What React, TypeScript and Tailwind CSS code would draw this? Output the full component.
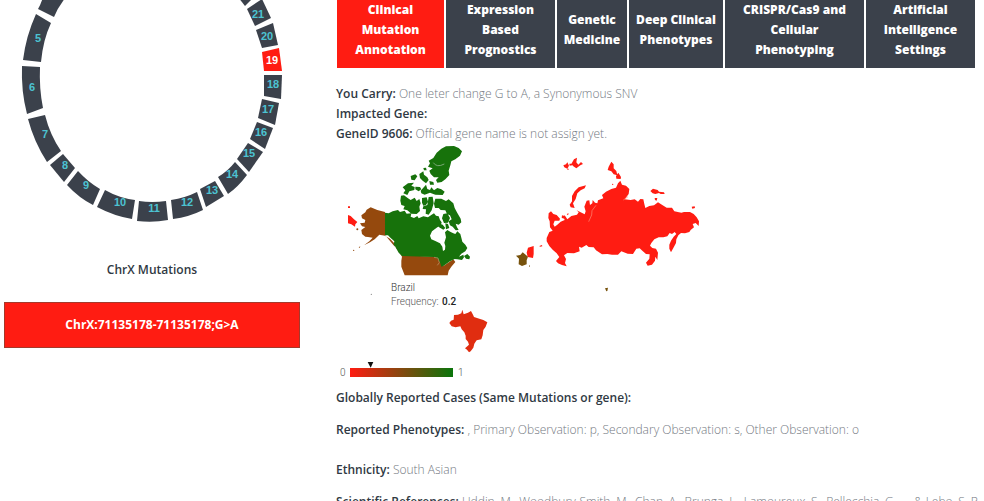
import React from "react";

const ink = "#3b414b";
const red = "#ff1c12";

const segments = [
  { n: "", d: "M38,9 Q41,4 43,-3 L66,-3 Q58,7 54,17 Z" },
  { n: "5", x: 38, y: 38, d: "M36,14 Q26,36 23,60 L41,62 Q43,40 51,23 Z" },
  { n: "6", x: 32, y: 87, d: "M22,66 Q21,91 27,114 L43,108 Q39,88 40,67 Z" },
  { n: "7", x: 45, y: 134, d: "M28,119 Q34,142 47,162 L61,151 Q50,135 45,115 Z" },
  { n: "8", x: 65, y: 165, d: "M50,165 L64,182 75,168 63,154 Z" },
  { n: "9", x: 86, y: 185, d: "M67,185 Q79,198 93,205 L100,189 Q88,182 78,171 Z" },
  { n: "10", x: 120, y: 202, d: "M97,207 Q114,216 132,219 L135,200 Q119,198 105,190 Z" },
  { n: "11", x: 154, y: 208, d: "M137,221 Q153,223 168,220 L166,201 Q152,203 139,201 Z" },
  { n: "12", x: 187, y: 202, d: "M173,219 Q189,217 203,210 L197,192 Q185,198 171,200 Z" },
  { n: "13", x: 212, y: 190, d: "M206,207 L224,196 215,181 200,189 Z" },
  { n: "14", x: 232, y: 174, d: "M228,194 Q238,187 247,175 L235,162 Q228,171 218,177 Z" },
  { n: "15", x: 249, y: 153, d: "M249,172 L263,152 248,143 237,159 Z" },
  { n: "16", x: 261, y: 132, d: "M265,149 L273,128 257,122 250,139 Z" },
  { n: "17", x: 268, y: 109, d: "M275,125 L279,103 262,99 258,118 Z" },
  { n: "18", x: 273, y: 84, d: "M281,99 L282,75 264,75 264,96 Z" },
  { n: "19", x: 272, y: 60, active: true, d: "M282,71 L279,48 262,52 264,71 Z" },
  { n: "20", x: 267, y: 36, d: "M278,45 L273,23 256,30 262,48 Z" },
  { n: "21", x: 258, y: 14, d: "M271,18 L262,-1 247,9 255,26 Z" },
  { n: "", d: "M245,6 L253,-2 238,-3 Z" },
];

function Ring() {
  return (
    <svg viewBox="0 0 304 232" className="block w-[304px]" role="img" aria-label="Chromosomes">
      {segments.map((s, i) => (
        <g key={i}>
          <path d={s.d} fill={s.active ? red : ink} />
          {s.n && (
            <text
              x={s.x}
              y={s.y! + 4}
              textAnchor="middle"
              className="font-['Liberation_Sans',sans-serif] text-[11px] font-bold"
              fill={s.active ? "#ffffff" : "#4cc3d2"}
            >
              {s.n}
            </text>
          )}
        </g>
      ))}
    </svg>
  );
}

function FrequencyMap() {
  return (
    <svg viewBox="336 144 376 236" className="block w-[376px]" role="img" aria-label="Frequency by country">
      <defs>
        <linearGradient id="scale">
          <stop offset="0" stopColor={red} />
          <stop offset="1" stopColor="#0a750b" />
        </linearGradient>
      </defs>
      <g transform="translate(340 140) scale(0.33333)">
        <g fill="#95490d">
          <path d="M135,216 L112,210 92,202 80,209 76,217 64,226 66,235 76,240 74,248 60,250 66,259 76,261 64,270 66,282 76,290 84,291 98,293 88,304 72,316 90,307 104,298 118,284 135,287 150,296 165,312 164,320 172,326 186,350 184,362 184,380 194,406 323,406 326,392 334,380 346,366 340,358 310,378 290,350 186,346 135,285 Z" />
          <circle cx="41" cy="331" r="2" />
          <circle cx="52" cy="268" r="3" />
          <path d="M56,322 l5,-3 -2,5z" />
        </g>
        <path fill={red} d="M24,225 L32,228 42,238 52,246 46,253 45,260 34,253 24,250 Z M24,199 l6,0 0,5 -6,0z" />
        <g fill="#17720b">
          <path d="M135,218 L146,220 158,214 174,210 180,216 194,212 200,221 214,220 212,230 222,234 232,228 236,235 250,229 264,232 275,224 282,220 288,227 296,229 300,240 305,247 302,257 292,262 276,274 270,287 274,298 286,303 300,310 307,320 309,333 315,329 316,318 313,308 318,292 315,277 322,270 332,276 340,280 346,282 352,274 361,282 364,293 367,305 376,314 382,324 376,334 364,341 357,350 370,344 372,352 366,360 352,358 344,357 330,364 310,378 304,380 301,370 293,356 282,351 186,348 176,338 166,320 161,314 163,304 152,294 144,286 135,286 Z" />
          <path d="M372,348 L382,342 390,350 388,358 378,356 Z" />
          <path d="M280,54 L290,38 304,26 318,19 342,18 356,24 366,34 360,47 346,58 334,64 331,76 326,92 328,105 316,118 305,126 292,128 288,120 296,112 282,112 272,102 268,92 278,85 264,80 270,70 266,62 Z" />
          <path d="M238,102 L250,94 252,104 262,112 266,120 258,130 248,122 240,114 Z M250,84 l8,-1 2,8 -8,0z M212,108 l14,-5 6,6 -8,12 -10,-2z M268,123 l12,3 2,8 -12,0z" />
          <path d="M188,142 L204,130 222,128 214,137 224,141 223,150 208,154 202,165 190,160 196,151 Z M226,140 L240,141 244,148 236,154 226,148 Z M242,152 L258,134 262,147 270,150 274,142 282,151 292,144 304,148 314,155 308,165 286,164 270,158 254,164 244,160 Z" />
          <path d="M183,167 L192,166 204,175 212,180 224,173 230,183 238,177 242,190 238,200 240,213 230,222 214,221 202,211 190,208 194,198 184,195 181,182 Z M246,174 L260,172 264,185 258,195 250,197 246,188 Z M266,171 L278,170 281,190 275,211 266,224 257,221 258,208 248,207 250,199 262,195 Z" />
          <path d="M286,176 L304,176 318,183 326,178 340,190 344,204 352,219 362,236 364,247 356,254 347,251 351,262 356,270 347,271 338,260 330,256 326,244 335,238 330,226 321,222 316,211 302,210 296,204 285,204 282,191 Z M310,222 l12,-2 8,14 -6,14 -12,1 -6,-14z M296,250 l12,4 8,10 -6,5 -14,-8z M316,250 l8,2 4,12 -10,4z" />
        </g>
        <path d="M280,68 Q290,84 313,72" fill="none" stroke="#78a874" strokeWidth="3" />
        <path d="M282,352 l12,2 4,14 -6,8" fill="none" stroke="#c49b75" strokeWidth="2" />
      </g>
      <g transform="translate(500 140) scale(0.33333)">
        <g fill={red}>
          <path d="M146,220 L153,214 160,222 170,225 180,236 178,242 164,242 160,253 164,260 172,254 182,245 194,240 190,230 194,226 202,238 214,228 231,224 236,217 230,211 242,217 254,223 257,214 253,200 260,182 268,181 270,195 277,190 278,180 285,188 292,190 294,181 304,177 310,175 306,165 318,155 334,147 348,143 354,130 361,122 366,134 378,137 388,147 386,162 374,178 392,180 404,178 414,185 421,177 430,178 433,192 436,204 448,198 462,196 474,187 488,196 500,203 516,203 523,214 544,218 552,216 570,216 581,222 590,232 597,244 596,258 587,249 578,252 582,262 572,270 568,276 555,280 543,279 535,286 529,298 528,309 520,324 513,337 508,326 508,314 513,302 521,290 529,282 524,276 516,282 509,279 502,289 490,292 476,292 463,298 454,309 450,317 457,324 468,326 474,338 472,360 466,350 465,362 456,374 443,377 438,368 448,356 449,343 438,342 427,332 419,325 409,326 399,342 383,341 364,334 354,344 336,344 322,342 306,343 288,331 281,322 266,321 259,315 245,323 237,320 239,334 222,340 202,339 192,346 198,357 195,369 200,379 186,375 174,370 168,363 178,351 170,340 158,329 148,318 140,304 140,294 148,276 158,272 150,262 149,244 145,234 Z" />
          <path d="M258,136 L254,145 242,151 232,160 227,177 219,190 224,204 212,202 209,194 216,184 216,168 224,154 236,142 Z" />
          <path d="M190,76 l8,-3 4,-6 5,10 -5,9 -9,-4z M208,71 l7,0 2,5 -8,1z M216,68 l6,-10 9,-5 -2,14 6,7 8,-8 6,6 -8,4 -12,9 -9,-6 -6,-7z M202,86 l4,0 0,3 -4,0z" />
          <path d="M326,80 l8,-15 7,8 0,12 8,8 3,13 -11,-3 -7,-9 -11,-4z M348,108 l7,-10 8,13 -1,6 -13,-1z" />
          <path d="M451,153 l8,-7 14,4 4,5 15,2 2,5 -12,0 -5,-3 -11,3 -8,-2z M464,174 l8,0 -2,8 -5,-2z M575,200 l9,-1 1,5 -8,2z M186,226 l8,2 -3,8 -6,-3z M200,222 l6,-2 -2,6z M118,318 l8,-3 1,4 -7,1z M84,323 L101,318 101,342 99,354 83,351 80,338 Z" />
          <circle cx="338" cy="133" r="2" />
        </g>
        <path d="M266,245 L275,225 276,212 288,196 M370,180 L384,170" fill="none" stroke="#ff8c79" strokeWidth="2" />
        <path fill="#77520c" d="M48,347 L61,345 68,337 77,344 84,350 80,361 80,373 66,378 56,373 57,356 Z" />
        <path fill="#77520c" d="M315,445 l9,-2 -2,10 -3,1z M88,376 l2,0 0,5 -2,-1z" />
      </g>
      <g transform="translate(330 270) scale(0.33333)">
        <path
          fill="#e02d10"
          d="M372,135 L384,134 394,130 397,119 401,133 414,128 423,123 429,134 432,141 448,146 460,150 472,157 467,170 460,180 458,196 454,208 440,211 433,221 430,233 422,244 417,247 411,239 405,235 417,224 414,215 407,207 407,197 403,187 395,178 391,169 377,172 365,169 358,159 363,152 371,149 Z"
        />
        <circle cx="124" cy="73" r="2" fill="#888" />
        <path d="M113,276 h17 l-8,17z" fill="#111" />
      </g>
      <rect x="350" y="368" width="103" height="9" fill="url(#scale)" />
      <g className="font-[Roboto,sans-serif] text-[10px]" fill="#555">
        <text x="391" y="291" fill="#333">Brazil</text>
        <text x="391" y="305">Frequency:</text>
        <text x="442" y="305" fill="#222" className="font-medium">0.2</text>
        <text x="340" y="376">0</text>
        <text x="458" y="376">1</text>
      </g>
    </svg>
  );
}

const tabs = [
  "Clinical Mutation Annotation",
  "Expression Based Prognostics",
  "Genetic Medicine",
  "Deep Clinical Phenotypes",
  "CRISPR/Cas9 and Cellular Phenotyping",
  "Artificial Intelligence Settings",
];

function Field({ label, children }: { label: string; children?: React.ReactNode }) {
  return (
    <p>
      <b className="font-semibold text-[#303943]">{label}</b> {children}
    </p>
  );
}

export default function App() {
  return (
    <div className="flex h-screen overflow-hidden bg-white font-['Open_Sans',sans-serif] text-[12px] leading-5 text-[#747982]">
      <aside className="w-[304px] shrink-0">
        <Ring />
        <h2 className="mt-7 text-center font-semibold text-[#303943]">ChrX Mutations</h2>
        <div className="mt-[22px] pr-1 pl-1">
          <button className="h-[46px] w-full border border-[#a5392b] bg-[#ff1c12] font-bold text-white">
            ChrX:71135178-71135178;G&gt;A
          </button>
        </div>
      </aside>
      <main className="ml-8 min-w-0 flex-1 pr-2">
        <nav className="grid h-[68px] grid-cols-[107fr_109fr_70fr_94fr_139fr_109fr] gap-0.5 pr-px pl-px">
          {tabs.map((tab, i) => (
            <button
              key={tab}
              className={`flex items-center justify-center px-1.5 pb-2 text-center font-extrabold text-white ${
                i === 0 ? "bg-[#ff1c12]" : "bg-[#3b414b]"
              }`}
            >
              {tab}
            </button>
          ))}
        </nav>
        <section className="mt-4 font-light">
          <Field label="You Carry:">One leter change G to A, a Synonymous SNV</Field>
          <Field label="Impacted Gene:" />
          <Field label="GeneID 9606:">Official gene name is not assign yet.</Field>
          <FrequencyMap />
          <div className="mt-2">
            <Field label="Globally Reported Cases (Same Mutations or gene):" />
          </div>
          <div className="mt-3">
            <Field label="Reported Phenotypes:">
              , Primary Observation: p, Secondary Observation: s, Other Observation: o
            </Field>
          </div>
          <div className="mt-5">
            <Field label="Ethnicity:">South Asian</Field>
          </div>
          <div className="mt-3 whitespace-nowrap">
            <Field label="Scientific References:">
              Uddin, M., Woodbury-Smith, M., Chan, A., Brunga, L., Lamoureux, S., Pellecchia, G., ... &amp; Lebo, S. R.
            </Field>
          </div>
        </section>
      </main>
    </div>
  );
}
